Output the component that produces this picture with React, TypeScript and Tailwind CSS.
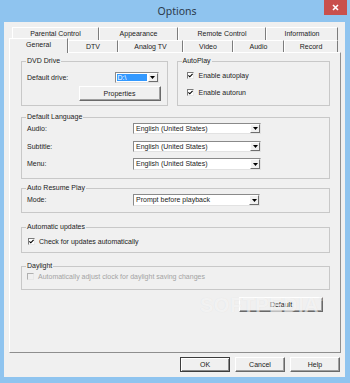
import React from "react";

const font = "font-['Liberation_Sans',Arial,sans-serif]";

function Arrow() {
  return (
    <svg width="5" height="3" viewBox="0 0 5 3">
      <path d="M0 0H5L2.5 3Z" fill="#000" />
    </svg>
  );
}

function Combo({ className, text, selected }: { className: string; text: string; selected?: boolean }) {
  return (
    <div className={`flex bg-white border border-t-[#8a8a8a] border-l-[#8a8a8a] border-r-[#e2e2e2] border-b-[#e2e2e2] ${className}`}>
      <div className="flex-1 flex items-stretch py-[1px] pl-[1px] pr-[1px] overflow-hidden">
        {selected ? (
          <span className="flex-1 flex items-center bg-[#3399ff] text-white pl-[1px]">{text}</span>
        ) : (
          <span className="flex items-center pl-[1px] whitespace-nowrap">{text}</span>
        )}
      </div>
      <div className="w-[10px] flex items-center justify-center bg-[#f0f0f0] border border-t-white border-l-white border-r-[#6e6e6e] border-b-[#6e6e6e]">
        <Arrow />
      </div>
    </div>
  );
}

function Check({ checked, disabled }: { checked?: boolean; disabled?: boolean }) {
  return (
    <div
      className={`w-[7px] h-[7px] shrink-0 border border-t-[#7a7a7a] border-l-[#7a7a7a] border-r-[#e8e8e8] border-b-[#e8e8e8] flex items-center justify-center ${
        disabled ? "bg-[#f0f0f0] border-t-[#b0b0b0] border-l-[#b0b0b0]" : "bg-white"
      }`}
    >
      {checked && (
        <svg width="5" height="5" viewBox="0 0 5 5">
          <path d="M0.4 2.3L1.8 3.8L4.6 0.8" stroke="#000" strokeWidth="1.1" fill="none" />
        </svg>
      )}
    </div>
  );
}

function Btn({ className, children, isDefault }: { className: string; children: React.ReactNode; isDefault?: boolean }) {
  return (
    <div
      className={`flex items-center justify-center bg-[#f0f0f0] border ${
        isDefault
          ? "border-[#3c3c3c] shadow-[inset_1px_1px_0_white,inset_-1px_-1px_0_#8a8a8a]"
          : "border-t-white border-l-white border-r-[#696969] border-b-[#696969] shadow-[inset_-1px_-1px_0_#a0a0a0]"
      } ${className}`}
    >
      {children}
    </div>
  );
}

function Group({ title, className, children }: { title: string; className: string; children?: React.ReactNode }) {
  return (
    <fieldset className={`border border-[#c8c8c8] min-w-0 ${className}`}>
      <legend className="ml-[4px] px-[1px] text-[7px] leading-[8px]">{title}</legend>
      {children}
    </fieldset>
  );
}

function Tab({ label, className }: { label: string; className: string }) {
  return (
    <div
      className={`flex items-center justify-center border-t border-l border-r border-t-white border-l-white border-r-[#7c7c7c] whitespace-nowrap ${className}`}
    >
      {label}
    </div>
  );
}

export default function App() {
  return (
    <div className={`${font} w-[350px] h-[383px] bg-[#8fc4ef] flex flex-col text-[7px] leading-[8px] text-[#1b1b1b]`}>
      {/* Title bar */}
      <div className="h-[22px] flex relative items-start">
        <div className="flex-1 flex justify-center pt-[5px] pl-[4px] text-[10.5px] leading-[12px] text-[#2b3a4c] font-['Noto_Sans',Arial,sans-serif]">
          Options
        </div>
        <div className="absolute left-[324px] top-0 w-[23px] h-[15px] bg-[#c9504d] flex items-center justify-center">
          <svg width="7" height="7" viewBox="0 0 7 7">
            <path d="M1 1L6 6M6 1L1 6" stroke="white" strokeWidth="1.6" />
          </svg>
        </div>
      </div>

      {/* Client area */}
      <div className="flex-1 ml-[4px] mr-[5px] mb-[6px] bg-[#f0f0f0] flex flex-col pt-[5px] pl-[5px] pr-[4px]">
        {/* Tab row 1 */}
        <div className="flex h-[13px] ml-[3px]">
          <Tab label="Parental Control" className="w-[87px] pb-[1px]" />
          <Tab label="Appearance" className="w-[79px] pb-[1px]" />
          <Tab label="Remote Control" className="w-[88px] pb-[1px]" />
          <Tab label="Information" className="w-[72px] pb-[1px]" />
        </div>
        {/* Tab row 2 */}
        <div className="flex h-[12px] items-end">
          <div className="relative z-10 w-[59px] h-[15px] -mb-[1px] bg-[#f0f0f0] flex items-center justify-center border-t border-l border-r border-t-white border-l-white border-r-[#7c7c7c] pb-[2px]">
            General
          </div>
          <Tab label="DTV" className="w-[50px] h-[12px]" />
          <Tab label="Analog TV" className="w-[65px] h-[12px]" />
          <Tab label="Video" className="w-[50px] h-[12px]" />
          <Tab label="Audio" className="w-[51px] h-[12px]" />
          <Tab label="Record" className="w-[54px] h-[12px]" />
        </div>

        {/* Panel */}
        <div className="relative h-[301px] border border-t-white border-l-white border-r-[#8e8e8e] border-b-[#8e8e8e] flex flex-col pt-[4px] pl-[11px] pr-[10px]">
          <div className="flex gap-[9px]">
            <Group title="DVD Drive" className="w-[147px] h-[49px]">
              <div className="pl-[5px] pr-[8px] mt-[7px] h-[11px] flex items-center justify-between">
                <span>Default drive:</span>
                <Combo className="w-[44px] h-[11px]" text="D:\" selected />
              </div>
              <div className="flex justify-end pr-[6px] mt-[3px]">
                <Btn className="w-[82px] h-[15px]">Properties</Btn>
              </div>
            </Group>
            <Group title="AutoPlay" className="w-[154px] h-[49px]">
              <div className="pl-[9px] mt-[7px] flex items-center gap-[5px] h-[7px]">
                <Check checked />
                <span>Enable autoplay</span>
              </div>
              <div className="pl-[9px] mt-[10px] flex items-center gap-[5px] h-[7px]">
                <Check checked />
                <span>Enable autorun</span>
              </div>
            </Group>
          </div>

          <Group title="Default Language" className="mt-[7px] h-[66px]">
            <div className="pl-[5px] mt-[2px] flex items-center h-[11px]">
              <span className="w-[106px]">Audio:</span>
              <Combo className="w-[128px] h-[11px]" text="English (United States)" />
            </div>
            <div className="pl-[5px] mt-[7px] flex items-center h-[11px]">
              <span className="w-[106px]">Subtitle:</span>
              <Combo className="w-[128px] h-[11px]" text="English (United States)" />
            </div>
            <div className="pl-[5px] mt-[6px] flex items-center h-[12px]">
              <span className="w-[106px]">Menu:</span>
              <Combo className="w-[128px] h-[12px]" text="English (United States)" />
            </div>
          </Group>

          <Group title="Auto Resume Play" className="mt-[5px] h-[29px]">
            <div className="pl-[5px] mt-[2px] flex items-center h-[12px]">
              <span className="w-[106px]">Mode:</span>
              <Combo className="w-[127px] h-[12px]" text="Prompt before playback" />
            </div>
          </Group>

          <Group title="Automatic updates" className="mt-[10px] h-[30px]">
            <div className="pl-[6px] mt-[7px] flex items-center gap-[4px] h-[7px]">
              <Check checked />
              <span>Check for updates automatically</span>
            </div>
          </Group>

          <Group title="Daylight" className="mt-[9px] h-[28px]">
            <div className="pl-[5px] mt-[3px] flex items-center gap-[4px] h-[7px]">
              <Check disabled />
              <span className="text-[#a3a3a3]">Automatically adjust clock for daylight saving changes</span>
            </div>
          </Group>

          <div className="flex justify-end pr-[7px] mt-[7px]">
            <Btn className="w-[84px] h-[15px]">Default</Btn>
          </div>

          <div className="absolute left-[190px] top-[242px] text-[20px] leading-[20px] font-bold text-white/60 tracking-[0.5px] [text-shadow:0_0_1px_rgba(0,0,0,0.08)] pointer-events-none flex items-start">
            SOFTPEDIA<span className="text-[6px] leading-[6px] mt-[1px]">®</span>
          </div>
        </div>

        {/* Bottom buttons */}
        <div className="flex justify-end gap-[5px] mt-[4px] pr-[1px]">
          <Btn className="w-[50px] h-[15px]" isDefault>OK</Btn>
          <Btn className="w-[50px] h-[15px]">Cancel</Btn>
          <Btn className="w-[50px] h-[15px]">Help</Btn>
        </div>
      </div>
    </div>
  );
}
